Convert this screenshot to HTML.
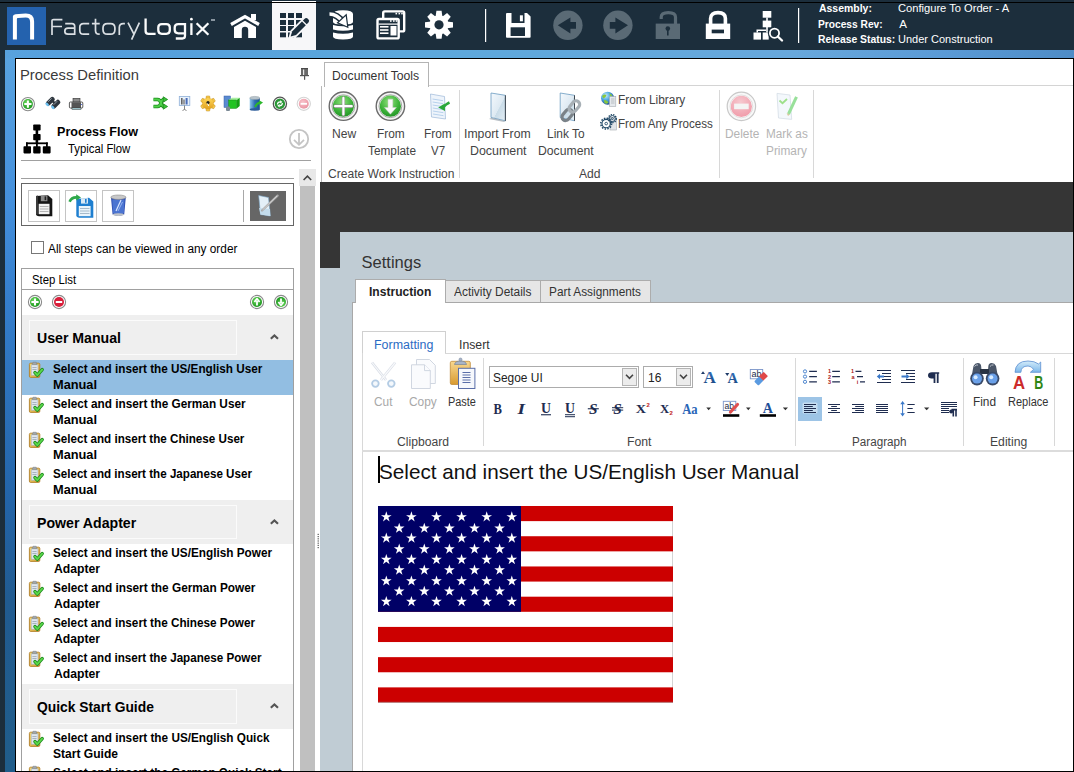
<!DOCTYPE html>
<html><head><meta charset="utf-8">
<style>
*{box-sizing:border-box}
html,body{margin:0;padding:0}
body{width:1074px;height:772px;overflow:hidden;position:relative;background:#1c2e3c;font-family:"Liberation Sans",sans-serif;color:#000}
.a{position:absolute}
.t{position:absolute;white-space:nowrap;line-height:1}

</style></head><body>
<div class="a" style="left:0;top:2px;width:1074px;height:1px;background:#000"></div>
<div class="a" style="left:272px;top:1px;width:44px;height:1px;background:#fff"></div>
<div class="a" style="left:272px;top:3px;width:44px;height:47px;background:#f7f7f9"></div>
<svg class="a" style="left:0;top:0" width="1074" height="50" viewBox="0 0 1074 50">
 <!-- logo box -->
 <rect x="7" y="7" width="39" height="38" fill="#2462ae"/>
 <path d="M12.9 39.5 V16.2 Q13 14.6 15.5 14.2 L25.5 13.6 Q34.1 13.4 34.1 21.5 V39.5 H30.1 V22 Q30.1 17.6 25.8 17.6 L17.8 18 Q16.9 18.1 16.9 19.2 V39.5 Z" fill="#fff"/>
 <!-- home -->
 <path d="M231 24.5 L245 16.5 L259 24.5" fill="none" stroke="#fff" stroke-width="3.2" stroke-linejoin="miter"/>
 <rect x="251" y="14" width="5" height="6" fill="#fff"/>
 <path d="M234 27 L245 20.8 L256 27 V38 H248.2 V30 Q248.2 26.8 245 26.8 Q241.8 26.8 241.8 30 V38 H234 Z" fill="#fff"/>
 <!-- grid pencil (on light tab) -->
 <g fill="#1c2e3c">
  <rect x="280" y="13" width="6" height="5"/><rect x="288" y="13" width="6" height="5"/><rect x="296" y="13" width="6" height="5"/>
  <rect x="280" y="20" width="6" height="5"/><rect x="288" y="20" width="6" height="5"/><rect x="296" y="20" width="6" height="5"/>
  <rect x="280" y="26" width="6" height="5"/><rect x="288" y="26" width="6" height="5"/><rect x="296" y="26" width="6" height="5"/>
  <rect x="280" y="32.5" width="6" height="4.8"/><rect x="288" y="32.5" width="6" height="4.8"/><rect x="296" y="32.5" width="6" height="4.8"/>
 </g>
 <g transform="translate(290.6,36.6) rotate(-45)">
  <path d="M-1 0 L4.6 -3.2 H23 Q25.4 -3.2 25.4 0 Q25.4 3.2 23 3.2 H4.6 Z" fill="#f7f7f9" stroke="#f7f7f9" stroke-width="2.4" stroke-linejoin="miter"/>
  <path d="M0 0 L5 -2.7 H18.8 V2.7 H5 Z" fill="#1c2e3c"/>
  <path d="M20.1 -2.7 H22.6 Q24.8 -2.7 24.8 0 Q24.8 2.7 22.6 2.7 H20.1 Z" fill="#1c2e3c"/>
  
 </g>
 <!-- database -->
 <g fill="#fff">
  <path d="M333 14 Q333 10.2 343 10.2 Q353 10.2 353 14 V22 Q353 24.5 343 24.5 Q333 24.5 333 22 Z"/>
  <path d="M333 25 Q343 27.5 353 25 V29.5 Q343 32 333 29.5 Z"/>
  <path d="M333 32.5 Q343 35 353 32.5 V36.5 Q353 39.5 343 39.5 Q333 39.5 333 36.5 Z"/>
 </g>
 <path d="M329.5 14 Q337 14 344 23" fill="none" stroke="#1c2e3c" stroke-width="6.4"/>
 <path d="M329.5 14 Q337 14 343.5 22.5" fill="none" stroke="#fff" stroke-width="3.6"/>
 <path d="M347.8 27.2 L337.5 22.8 L346.2 14.8 Z" fill="#fff" stroke="#1c2e3c" stroke-width="1.2"/>
 <!-- windows -->
 <rect x="383.2" y="11.4" width="21" height="20" rx="1.5" fill="none" stroke="#fff" stroke-width="2.4"/>
 <rect x="377.5" y="19" width="21.2" height="19.4" rx="1.5" fill="#1c2e3c" stroke="#fff" stroke-width="2.4"/>
 <g fill="#fff"><rect x="395.5" y="12.8" width="1.6" height="1.6"/><rect x="398.5" y="12.8" width="1.6" height="1.6"/><rect x="401.2" y="12.8" width="1.6" height="1.6"/>
 <rect x="390" y="20.2" width="1.6" height="1.6"/><rect x="393" y="20.2" width="1.6" height="1.6"/><rect x="395.7" y="20.2" width="1.6" height="1.6"/>
 <rect x="378.5" y="23.5" width="19.5" height="1.2"/>
 <rect x="380" y="26" width="8.5" height="1.6"/><rect x="380" y="29.2" width="8.5" height="1.6"/><rect x="380" y="32.4" width="8.5" height="1.6"/>
 <rect x="390.5" y="26" width="6" height="9.5"/></g>
 <!-- gear -->
 <g transform="translate(439,24.8)" fill="#fff">
  <path id="gt" d="M-2.6 -14 H2.6 L3.4 -8 H-3.4 Z"/>
  <use href="#gt" transform="rotate(45)"/><use href="#gt" transform="rotate(90)"/><use href="#gt" transform="rotate(135)"/>
  <use href="#gt" transform="rotate(180)"/><use href="#gt" transform="rotate(225)"/><use href="#gt" transform="rotate(270)"/><use href="#gt" transform="rotate(315)"/>
  <circle r="9.6"/>
  <circle r="4.6" fill="#1c2e3c"/>
 </g>
 <rect x="485" y="9" width="1.2" height="33" fill="#fff"/>
 <!-- save -->
 <path d="M506 14 Q506 13 507 13 H527 L530.6 16.6 V37 Q530.6 37.8 529.6 37.8 H507 Q506 37.8 506 37 Z" fill="#fff"/>
 <rect x="511.5" y="13" width="13" height="10" fill="#1c2e3c"/>
 <rect x="519.9" y="15.3" width="3" height="6" fill="#fff"/>
 <rect x="510.6" y="27.3" width="14.4" height="8.7" fill="#1c2e3c"/>
 <!-- back/forward -->
 <circle cx="567.9" cy="25.3" r="14.7" fill="#5a6a75"/>
 <path d="M557.8 25.3 L570.4 17.6 V22 H576 V28.7 H570.4 V33.4 Z" fill="#1c2e3c"/>
 <circle cx="617.9" cy="25.3" r="14.7" fill="#5a6a75"/>
 <path d="M628 25.3 L615.4 17.6 V22 H609.8 V28.7 H615.4 V33.4 Z" fill="#1c2e3c"/>
 <!-- unlock -->
 <path d="M661.2 19 V17 Q661.2 12.6 668.3 12.6 Q675.5 12.6 675.5 17 V24" fill="none" stroke="#5a6a75" stroke-width="3.2"/>
 <rect x="655.7" y="23.6" width="24.3" height="15.4" fill="#5a6a75"/>
 <circle cx="667.8" cy="28.6" r="2.3" fill="#1c2e3c"/><rect x="667" y="29" width="1.6" height="6.5" fill="#1c2e3c"/>
 <!-- lock -->
 <path d="M710.6 24 V18.5 Q710.6 12.6 718 12.6 Q725.4 12.6 725.4 18.5 V24" fill="none" stroke="#fff" stroke-width="3.6"/>
 <rect x="705.8" y="23.6" width="24.4" height="15.4" fill="#fff"/>
 <rect x="711.7" y="29.6" width="12.3" height="3.7" fill="#1c2e3c"/>
 <!-- process search -->
 <g fill="#fff">
  <rect x="762.7" y="11" width="8.6" height="6.7"/>
  <rect x="766.2" y="17.5" width="1.6" height="3.5"/>
  <rect x="762.7" y="20.6" width="8.6" height="6.7"/>
  <rect x="766.2" y="27" width="1.6" height="5.5"/>
  <rect x="753.5" y="32.5" width="7.5" height="7.1"/>
  <rect x="762.7" y="32.5" width="6" height="7.1"/>
  <path d="M756.5 32.5 V29.6 H766 V31 H758 V32.5 Z"/>
 </g>
 <circle cx="774.5" cy="33.2" r="6.6" fill="#1c2e3c"/>
 <circle cx="774.5" cy="33.2" r="4.6" fill="none" stroke="#fff" stroke-width="1.8"/>
 <path d="M777.8 36.5 L782 40.5" stroke="#fff" stroke-width="2.4" stroke-linecap="round"/>
 <rect x="798" y="8" width="1.2" height="35" fill="#fff"/>
</svg>
<svg class="a" style="left:0;top:0" width="230" height="50" viewBox="0 0 230 50"><g fill="none" stroke="#dadfe3" stroke-width="1.7" stroke-linecap="butt">
<path d="M52 35 V20.6 Q52 19.7 53.6 19.7 H62.4 M52 26.5 H62"/>
<path d="M65.2 23.6 H72 Q74.7 23.6 74.7 26.3 V35 M74.7 28.2 H68 Q64.8 28.2 64.8 31.2 Q64.8 34.2 68 34.2 H74.7"/>
<path d="M89.2 23.6 H83.5 Q79.8 23.6 79.8 27.3 V30.5 Q79.8 34.2 83.5 34.2 H89.2"/>
<path d="M95.5 18.7 V30.5 Q95.5 34.2 99.2 34.2 H99.7 M91.9 23.6 H99.7"/>
<path d="M107.4 23.6 H110.5 Q114.9 23.6 114.9 28.1 V29.7 Q114.9 34.2 110.5 34.2 H107.4 Q103 34.2 103 29.7 V28.1 Q103 23.6 107.4 23.6 Z"/>
<path d="M119.3 35 V27.6 Q119.3 23.6 123.3 23.6 H124.9"/>
<path d="M128 22.7 L134.2 34.6 M139.4 22.7 L131.6 39.7"/>
</g><g fill="none" stroke="#fbfcfc" stroke-width="2.3">
<path d="M145.6 18.5 V31 Q145.6 33.8 148.4 33.8 H155.6"/>
<path d="M161.8 24.1 H166.3 Q169.8 24.1 169.8 27.6 V30.3 Q169.8 33.8 166.3 33.8 H161.8 Q158.3 33.8 158.3 30.3 V27.6 Q158.3 24.1 161.8 24.1 Z"/>
<path d="M185 24.1 H178.3 Q174.7 24.1 174.7 27.6 V29.8 Q174.7 33.3 178.3 33.3 H185 M185 23 V35.8 Q185 38.5 182.3 38.5 H175.8"/>
<path d="M191.4 23.2 V35"/>
<path d="M196.6 23.3 L208.4 34.8 M208.4 23.3 L196.6 34.8"/>
</g><circle cx="191.4" cy="19.2" r="1.35" fill="#fff"/></svg>
<div class="a" style="left:211px;top:19px;width:4px;height:1.5px;background:#8a96a0"></div>
<div class="t" style="left:819.20px;top:3.00px;color:#fff;font-family:'Liberation Sans',sans-serif;font-size:11.5px;font-weight:bold;transform:scaleX(0.9088);transform-origin:0 0;">Assembly:</div>
<div class="t" style="left:818.31px;top:19.00px;color:#fff;font-family:'Liberation Sans',sans-serif;font-size:11.5px;font-weight:bold;transform:scaleX(0.8873);transform-origin:0 0;">Process Rev:</div>
<div class="t" style="left:818.30px;top:34.00px;color:#fff;font-family:'Liberation Sans',sans-serif;font-size:11.5px;font-weight:bold;transform:scaleX(0.9024);transform-origin:0 0;">Release Status:</div>
<div class="t" style="left:898.33px;top:3.00px;color:#fff;font-family:'Liberation Sans',sans-serif;font-size:11.5px;transform:scaleX(0.9684);transform-origin:0 0;">Configure To Order - A</div>
<div class="t" style="left:899.30px;top:19.00px;color:#fff;font-family:'Liberation Sans',sans-serif;font-size:11.5px;">A</div>
<div class="t" style="left:898.34px;top:34.00px;color:#fff;font-family:'Liberation Sans',sans-serif;font-size:11.5px;transform:scaleX(0.9561);transform-origin:0 0;">Under Construction</div>
<div class="a" style="left:5px;top:50px;width:1069px;height:722px;background:linear-gradient(to bottom,#5aa4e0 0%,#4590dc 20.8%,#357ecc 34.6%,#2364a8 62.3%,#215b90 76.2%,#205d8a 100%)"></div>
<div class="a" style="left:5px;top:50px;width:1069px;height:8px;background:linear-gradient(to right,#58a2de 0%,#549edc 10%,#5ca8dc 37%,#68a8dc 74%,#5a9ad6 88%,#4e8cc6 100%)"></div>
<div class="a" style="left:15px;top:58px;width:1059px;height:714px;background:#000"></div>
<div class="a" style="left:16px;top:59px;width:1057px;height:712px;background:#fff"></div>
<div class="t" style="left:20.02px;top:67.00px;color:#3a3a3a;font-family:'Liberation Sans',sans-serif;font-size:15px;transform:scaleX(0.9832);transform-origin:0 0;">Process Definition</div>
<div class="a" style="left:21px;top:160px;width:290px;height:1px;background:#a0a0a0"></div>
<div class="t" style="left:57.07px;top:125.00px;color:#000;font-family:'Liberation Sans',sans-serif;font-size:13.5px;font-weight:bold;transform:scaleX(0.9302);transform-origin:0 0;">Process Flow</div>
<div class="t" style="left:67.70px;top:143.00px;color:#000;font-family:'Liberation Sans',sans-serif;font-size:12.5px;transform:scaleX(0.9058);transform-origin:0 0;">Typical Flow</div>
<div class="a" style="left:21px;top:178px;width:273px;height:1px;background:#a0a0a0"></div>
<div class="a" style="left:21px;top:183px;width:273px;height:43px;border:1px solid #666"></div>
<div class="a" style="left:28px;top:190px;width:32px;height:32px;border:1px solid #c4c4c4"></div>
<div class="a" style="left:65px;top:190px;width:32px;height:32px;border:1px solid #c4c4c4"></div>
<div class="a" style="left:102px;top:190px;width:32px;height:32px;border:1px solid #c4c4c4"></div>
<div class="a" style="left:243px;top:190px;width:1px;height:32px;background:#a8a8a8"></div>
<div class="a" style="left:250px;top:191px;width:36px;height:30px;background:#666"></div>
<div class="a" style="left:31px;top:241px;width:13px;height:13px;border:1px solid #777;background:#fff"></div>
<div class="t" style="left:48.20px;top:243.00px;color:#000;font-family:'Liberation Sans',sans-serif;font-size:12.5px;transform:scaleX(0.9465);transform-origin:0 0;">All steps can be viewed in any order</div>
<div class="a" style="left:21px;top:268px;width:273px;height:510px;border:1px solid #a0a0a0"></div>
<div class="a" style="left:22px;top:289px;width:271px;height:1px;background:#a0a0a0"></div>
<div class="t" style="left:32.29px;top:274.00px;color:#000;font-family:'Liberation Sans',sans-serif;font-size:12.5px;transform:scaleX(0.9083);transform-origin:0 0;">Step List</div>
<div class="a" style="left:22px;top:315px;width:271px;height:45px;background:#efefef"></div>
<div class="a" style="left:29px;top:320px;width:208px;height:35px;border:1px solid #fbfbfb"></div>
<div class="t" style="left:37.19px;top:331.00px;color:#000;font-family:'Liberation Sans',sans-serif;font-size:14px;font-weight:bold;transform:scaleX(1.0086);transform-origin:0 0;">User Manual</div>
<div class="a" style="left:22px;top:360px;width:271px;height:35px;background:#92bee2"></div>
<div class="t" style="left:52.86px;top:363.00px;color:#000;font-family:'Liberation Sans',sans-serif;font-size:12.5px;font-weight:bold;transform:scaleX(0.9387);transform-origin:0 0;">Select and insert the US/English User</div>
<div class="t" style="left:52.78px;top:379.00px;color:#000;font-family:'Liberation Sans',sans-serif;font-size:12.5px;font-weight:bold;transform:scaleX(1.0220);transform-origin:0 0;">Manual</div>
<div class="t" style="left:52.86px;top:398.00px;color:#000;font-family:'Liberation Sans',sans-serif;font-size:12.5px;font-weight:bold;transform:scaleX(0.9429);transform-origin:0 0;">Select and insert the German User</div>
<div class="t" style="left:52.78px;top:414.00px;color:#000;font-family:'Liberation Sans',sans-serif;font-size:12.5px;font-weight:bold;transform:scaleX(1.0220);transform-origin:0 0;">Manual</div>
<div class="t" style="left:52.87px;top:433.00px;color:#000;font-family:'Liberation Sans',sans-serif;font-size:12.5px;font-weight:bold;transform:scaleX(0.9307);transform-origin:0 0;">Select and insert the Chinese User</div>
<div class="t" style="left:52.78px;top:449.00px;color:#000;font-family:'Liberation Sans',sans-serif;font-size:12.5px;font-weight:bold;transform:scaleX(1.0220);transform-origin:0 0;">Manual</div>
<div class="t" style="left:52.87px;top:468.00px;color:#000;font-family:'Liberation Sans',sans-serif;font-size:12.5px;font-weight:bold;transform:scaleX(0.9296);transform-origin:0 0;">Select and insert the Japanese User</div>
<div class="t" style="left:52.78px;top:484.00px;color:#000;font-family:'Liberation Sans',sans-serif;font-size:12.5px;font-weight:bold;transform:scaleX(1.0220);transform-origin:0 0;">Manual</div>
<div class="a" style="left:22px;top:500px;width:271px;height:44px;background:#efefef"></div>
<div class="a" style="left:29px;top:505px;width:208px;height:34px;border:1px solid #fbfbfb"></div>
<div class="t" style="left:37.19px;top:516.00px;color:#000;font-family:'Liberation Sans',sans-serif;font-size:14px;font-weight:bold;transform:scaleX(1.0093);transform-origin:0 0;">Power Adapter</div>
<div class="t" style="left:52.86px;top:547.00px;color:#000;font-family:'Liberation Sans',sans-serif;font-size:12.5px;font-weight:bold;transform:scaleX(0.9414);transform-origin:0 0;">Select and insert the US/English Power</div>
<div class="t" style="left:53.80px;top:563.00px;color:#000;font-family:'Liberation Sans',sans-serif;font-size:12.5px;font-weight:bold;transform:scaleX(0.9745);transform-origin:0 0;">Adapter</div>
<div class="t" style="left:52.85px;top:582.00px;color:#000;font-family:'Liberation Sans',sans-serif;font-size:12.5px;font-weight:bold;transform:scaleX(0.9460);transform-origin:0 0;">Select and insert the German Power</div>
<div class="t" style="left:53.80px;top:598.00px;color:#000;font-family:'Liberation Sans',sans-serif;font-size:12.5px;font-weight:bold;transform:scaleX(0.9745);transform-origin:0 0;">Adapter</div>
<div class="t" style="left:52.86px;top:617.00px;color:#000;font-family:'Liberation Sans',sans-serif;font-size:12.5px;font-weight:bold;transform:scaleX(0.9383);transform-origin:0 0;">Select and insert the Chinese Power</div>
<div class="t" style="left:53.80px;top:633.00px;color:#000;font-family:'Liberation Sans',sans-serif;font-size:12.5px;font-weight:bold;transform:scaleX(0.9745);transform-origin:0 0;">Adapter</div>
<div class="t" style="left:52.87px;top:652.00px;color:#000;font-family:'Liberation Sans',sans-serif;font-size:12.5px;font-weight:bold;transform:scaleX(0.9318);transform-origin:0 0;">Select and insert the Japanese Power</div>
<div class="t" style="left:53.80px;top:668.00px;color:#000;font-family:'Liberation Sans',sans-serif;font-size:12.5px;font-weight:bold;transform:scaleX(0.9745);transform-origin:0 0;">Adapter</div>
<div class="a" style="left:22px;top:684px;width:271px;height:45px;background:#efefef"></div>
<div class="a" style="left:29px;top:689px;width:208px;height:35px;border:1px solid #fbfbfb"></div>
<div class="t" style="left:37.21px;top:700.00px;color:#000;font-family:'Liberation Sans',sans-serif;font-size:14px;font-weight:bold;transform:scaleX(0.9880);transform-origin:0 0;">Quick Start Guide</div>
<div class="t" style="left:52.86px;top:732.00px;color:#000;font-family:'Liberation Sans',sans-serif;font-size:12.5px;font-weight:bold;transform:scaleX(0.9415);transform-origin:0 0;">Select and insert the US/English Quick</div>
<div class="t" style="left:52.83px;top:748.00px;color:#000;font-family:'Liberation Sans',sans-serif;font-size:12.5px;font-weight:bold;transform:scaleX(0.9652);transform-origin:0 0;">Start Guide</div>
<div class="t" style="left:52.86px;top:767.00px;color:#000;font-family:'Liberation Sans',sans-serif;font-size:12.5px;font-weight:bold;transform:scaleX(0.9400);transform-origin:0 0;">Select and insert the German Quick Start</div>
<div class="t" style="left:53.80px;top:783.00px;color:#000;font-family:'Liberation Sans',sans-serif;font-size:12.5px;font-weight:bold;transform:scaleX(0.9700);transform-origin:0 0;">Guide</div>
<div class="a" style="left:324px;top:62px;width:105px;height:25px;border:1px solid #b4b4b4;border-bottom:none;background:#fff"></div>
<div class="a" style="left:429px;top:85px;width:644px;height:1px;background:#d4d4d4"></div>
<div class="a" style="left:321px;top:86px;width:1px;height:96px;background:#b8b8b8"></div>
<div class="t" style="left:332.48px;top:70.00px;color:#333;font-family:'Liberation Sans',sans-serif;font-size:12px;transform:scaleX(1.0155);transform-origin:0 0;">Document Tools</div>
<div class="a" style="left:459px;top:90px;width:1px;height:88px;background:#d8d8d8"></div>
<div class="a" style="left:719px;top:90px;width:1px;height:88px;background:#d8d8d8"></div>
<div class="a" style="left:813px;top:90px;width:1px;height:88px;background:#d8d8d8"></div>
<div class="t" style="left:331.73px;top:128.00px;color:#444;font-family:'Liberation Sans',sans-serif;font-size:12.5px;transform:scaleX(0.9667);transform-origin:0 0;">New</div>
<div class="t" style="left:376.65px;top:128.00px;color:#444;font-family:'Liberation Sans',sans-serif;font-size:12.5px;transform:scaleX(0.9500);transform-origin:0 0;">From</div>
<div class="t" style="left:367.50px;top:145.00px;color:#444;font-family:'Liberation Sans',sans-serif;font-size:12.5px;transform:scaleX(0.9460);transform-origin:0 0;">Template</div>
<div class="t" style="left:423.85px;top:128.00px;color:#444;font-family:'Liberation Sans',sans-serif;font-size:12.5px;transform:scaleX(0.9500);transform-origin:0 0;">From</div>
<div class="t" style="left:430.80px;top:145.00px;color:#444;font-family:'Liberation Sans',sans-serif;font-size:12.5px;transform:scaleX(0.9200);transform-origin:0 0;">V7</div>
<div class="t" style="left:327.53px;top:168.00px;color:#444;font-family:'Liberation Sans',sans-serif;font-size:12.5px;transform:scaleX(0.9651);transform-origin:0 0;">Create Work Instruction</div>
<div class="t" style="left:464.42px;top:128.00px;color:#444;font-family:'Liberation Sans',sans-serif;font-size:12.5px;transform:scaleX(0.9791);transform-origin:0 0;">Import From</div>
<div class="t" style="left:469.61px;top:145.00px;color:#444;font-family:'Liberation Sans',sans-serif;font-size:12.5px;transform:scaleX(0.9929);transform-origin:0 0;">Document</div>
<div class="t" style="left:547.04px;top:128.00px;color:#444;font-family:'Liberation Sans',sans-serif;font-size:12.5px;transform:scaleX(0.9553);transform-origin:0 0;">Link To</div>
<div class="t" style="left:538.22px;top:145.00px;color:#444;font-family:'Liberation Sans',sans-serif;font-size:12.5px;transform:scaleX(0.9768);transform-origin:0 0;">Document</div>
<div class="t" style="left:578.70px;top:168.00px;color:#444;font-family:'Liberation Sans',sans-serif;font-size:12.5px;transform:scaleX(0.9682);transform-origin:0 0;">Add</div>
<div class="t" style="left:618.05px;top:94.00px;color:#444;font-family:'Liberation Sans',sans-serif;font-size:12.5px;transform:scaleX(0.9500);transform-origin:0 0;">From Library</div>
<div class="t" style="left:618.07px;top:118.00px;color:#444;font-family:'Liberation Sans',sans-serif;font-size:12.5px;transform:scaleX(0.9287);transform-origin:0 0;">From Any Process</div>
<div class="t" style="left:724.75px;top:128.00px;color:#b4b4b4;font-family:'Liberation Sans',sans-serif;font-size:12.5px;transform:scaleX(0.9514);transform-origin:0 0;">Delete</div>
<div class="t" style="left:765.66px;top:128.00px;color:#b4b4b4;font-family:'Liberation Sans',sans-serif;font-size:12.5px;transform:scaleX(0.9395);transform-origin:0 0;">Mark as</div>
<div class="t" style="left:766.05px;top:145.00px;color:#b4b4b4;font-family:'Liberation Sans',sans-serif;font-size:12.5px;transform:scaleX(0.9476);transform-origin:0 0;">Primary</div>
<div class="a" style="left:320px;top:182px;width:753px;height:589px;background:#353535"></div>
<div class="a" style="left:340px;top:232px;width:733px;height:539px;background:#c0ccd4"></div>
<div class="a" style="left:320px;top:268px;width:20px;height:503px;background:#c0ccd4"></div>
<div class="t" style="left:361.60px;top:254.00px;color:#333;font-family:'Liberation Sans',sans-serif;font-size:16.5px;">Settings</div>
<div class="a" style="left:445px;top:280px;width:96px;height:23px;background:#e6e6e6;border:1px solid #acacac"></div>
<div class="a" style="left:540px;top:280px;width:111px;height:23px;background:#e6e6e6;border:1px solid #acacac"></div>
<div class="a" style="left:352px;top:302px;width:721px;height:469px;background:#fff;border-left:1px solid #a8a8a8;border-top:1px solid #a8a8a8"></div>
<div class="a" style="left:355px;top:279px;width:91px;height:24px;background:#fff;border:1px solid #acacac;border-bottom:none"></div>
<div class="t" style="left:368.53px;top:286.00px;color:#222;font-family:'Liberation Sans',sans-serif;font-size:12.5px;font-weight:bold;transform:scaleX(0.9651);transform-origin:0 0;">Instruction</div>
<div class="t" style="left:454.00px;top:286.00px;color:#333;font-family:'Liberation Sans',sans-serif;font-size:12.5px;transform:scaleX(0.9531);transform-origin:0 0;">Activity Details</div>
<div class="t" style="left:548.65px;top:286.00px;color:#333;font-family:'Liberation Sans',sans-serif;font-size:12.5px;transform:scaleX(0.9458);transform-origin:0 0;">Part Assignments</div>
<div class="a" style="left:362px;top:331px;width:84px;height:23px;border:1px solid #d0d0d0;border-bottom:none;background:#fff"></div>
<div class="a" style="left:445px;top:353px;width:628px;height:1px;background:#d8d8d8"></div>
<div class="a" style="left:362px;top:353px;width:1px;height:418px;background:#d8d8d8"></div>
<div class="t" style="left:374.31px;top:339.00px;color:#2b6cc4;font-family:'Liberation Sans',sans-serif;font-size:12.5px;transform:scaleX(0.9948);transform-origin:0 0;">Formatting</div>
<div class="t" style="left:459.22px;top:339.00px;color:#333;font-family:'Liberation Sans',sans-serif;font-size:12.5px;transform:scaleX(0.9800);transform-origin:0 0;">Insert</div>
<div class="a" style="left:483px;top:358px;width:1px;height:88px;background:#d8d8d8"></div>
<div class="a" style="left:795px;top:358px;width:1px;height:88px;background:#d8d8d8"></div>
<div class="a" style="left:963px;top:358px;width:1px;height:88px;background:#d8d8d8"></div>
<div class="a" style="left:1054px;top:358px;width:1px;height:88px;background:#d8d8d8"></div>
<div class="t" style="left:374.05px;top:396.00px;color:#a8a8a8;font-family:'Liberation Sans',sans-serif;font-size:12.5px;transform:scaleX(0.9474);transform-origin:0 0;">Cut</div>
<div class="t" style="left:409.05px;top:396.00px;color:#a8a8a8;font-family:'Liberation Sans',sans-serif;font-size:12.5px;transform:scaleX(0.9536);transform-origin:0 0;">Copy</div>
<div class="t" style="left:447.73px;top:396.00px;color:#333;font-family:'Liberation Sans',sans-serif;font-size:12.5px;transform:scaleX(0.8742);transform-origin:0 0;">Paste</div>
<div class="t" style="left:396.53px;top:436.00px;color:#444;font-family:'Liberation Sans',sans-serif;font-size:12.5px;transform:scaleX(0.9712);transform-origin:0 0;">Clipboard</div>
<div class="t" style="left:627.02px;top:436.00px;color:#444;font-family:'Liberation Sans',sans-serif;font-size:12.5px;transform:scaleX(0.9792);transform-origin:0 0;">Font</div>
<div class="t" style="left:851.87px;top:436.00px;color:#444;font-family:'Liberation Sans',sans-serif;font-size:12.5px;transform:scaleX(0.9333);transform-origin:0 0;">Paragraph</div>
<div class="t" style="left:990.03px;top:436.00px;color:#444;font-family:'Liberation Sans',sans-serif;font-size:12.5px;transform:scaleX(0.9730);transform-origin:0 0;">Editing</div>
<div class="t" style="left:973.05px;top:396.00px;color:#333;font-family:'Liberation Sans',sans-serif;font-size:12.5px;transform:scaleX(0.9478);transform-origin:0 0;">Find</div>
<div class="t" style="left:1007.92px;top:396.00px;color:#333;font-family:'Liberation Sans',sans-serif;font-size:12.5px;transform:scaleX(0.8822);transform-origin:0 0;">Replace</div>
<div class="a" style="left:489px;top:366px;width:150px;height:22px;border:1px solid #acacac;background:#fff"></div>
<div class="a" style="left:622px;top:368px;width:15px;height:18px;border:1px solid #b4b4b4;background:#ececec"></div>
<div class="a" style="left:643px;top:366px;width:50px;height:22px;border:1px solid #acacac;background:#fff"></div>
<div class="a" style="left:676px;top:368px;width:15px;height:18px;border:1px solid #b4b4b4;background:#ececec"></div>
<svg class="a" style="left:0;top:0" width="1074" height="772" viewBox="0 0 1074 772"><path d="M626 374.8 L629.5 378.3 L633 374.8 M680 374.8 L683.5 378.3 L687 374.8" fill="none" stroke="#444" stroke-width="1.6"/></svg>
<div class="t" style="left:492.75px;top:372.00px;color:#222;font-family:'Liberation Sans',sans-serif;font-size:12.5px;transform:scaleX(0.9540);transform-origin:0 0;">Segoe UI</div>
<div class="t" style="left:647.54px;top:372.00px;color:#222;font-family:'Liberation Sans',sans-serif;font-size:12.5px;transform:scaleX(0.9615);transform-origin:0 0;">16</div>
<div class="a" style="left:798px;top:397px;width:24px;height:24px;background:#9dc4e6"></div>
<div class="a" style="left:362px;top:450px;width:711px;height:2px;background:#dcdcdc"></div>
<div class="t" style="left:379.01px;top:461.00px;color:#111;font-family:'Liberation Sans',sans-serif;font-size:21px;transform:scaleX(0.9858);transform-origin:0 0;">Select and insert the US/English User Manual</div>
<div class="a" style="left:378px;top:456px;width:2px;height:27px;background:#000"></div>
<div class="a" style="left:299px;top:169px;width:17px;height:17px;background:#e8e8e8"></div>
<div class="a" style="left:300px;top:186px;width:15px;height:585px;background:#c0c0c0"></div>
<svg class="a" style="left:0;top:0" width="1074" height="772" viewBox="0 0 1074 772"><path d="M303.6 180 L307.4 176.2 L311.2 180" fill="none" stroke="#444" stroke-width="1.6"/></svg>
<div class="a" style="left:15px;top:771px;width:1059px;height:1px;background:#000"></div>
<div class="a" style="left:1073px;top:58px;width:1px;height:714px;background:#000"></div>
<svg class="a" style="left:378px;top:506px" width="295" height="196.5" viewBox="0 0 295 196.5"><rect width="295" height="196.5" fill="#fff"/><rect x="294" y="0" width="1" height="196.5" fill="#d4d4d4"/><rect x="0" y="0.00" width="295" height="15.12" fill="#cc0000"/><rect x="0" y="30.23" width="295" height="15.12" fill="#cc0000"/><rect x="0" y="60.46" width="295" height="15.12" fill="#cc0000"/><rect x="0" y="90.69" width="295" height="15.12" fill="#cc0000"/><rect x="0" y="120.92" width="295" height="15.12" fill="#cc0000"/><rect x="0" y="151.15" width="295" height="15.12" fill="#cc0000"/><rect x="0" y="181.38" width="295" height="15.12" fill="#cc0000"/><rect x="0" y="0" width="143" height="105.81" fill="#000066"/><path d="M8.30,5.30 L9.56,9.17 L13.63,9.17 L10.33,11.56 L11.59,15.43 L8.30,13.04 L5.01,15.43 L6.27,11.56 L2.97,9.17 L7.04,9.17ZM33.40,5.30 L34.66,9.17 L38.73,9.17 L35.43,11.56 L36.69,15.43 L33.40,13.04 L30.11,15.43 L31.37,11.56 L28.07,9.17 L32.14,9.17ZM58.50,5.30 L59.76,9.17 L63.83,9.17 L60.53,11.56 L61.79,15.43 L58.50,13.04 L55.21,15.43 L56.47,11.56 L53.17,9.17 L57.24,9.17ZM83.60,5.30 L84.86,9.17 L88.93,9.17 L85.63,11.56 L86.89,15.43 L83.60,13.04 L80.31,15.43 L81.57,11.56 L78.27,9.17 L82.34,9.17ZM108.70,5.30 L109.96,9.17 L114.03,9.17 L110.73,11.56 L111.99,15.43 L108.70,13.04 L105.41,15.43 L106.67,11.56 L103.37,9.17 L107.44,9.17ZM133.80,5.30 L135.06,9.17 L139.13,9.17 L135.83,11.56 L137.09,15.43 L133.80,13.04 L130.51,15.43 L131.77,11.56 L128.47,9.17 L132.54,9.17ZM21.20,16.70 L22.46,20.57 L26.53,20.57 L23.23,22.96 L24.49,26.83 L21.20,24.44 L17.91,26.83 L19.17,22.96 L15.87,20.57 L19.94,20.57ZM46.30,16.70 L47.56,20.57 L51.63,20.57 L48.33,22.96 L49.59,26.83 L46.30,24.44 L43.01,26.83 L44.27,22.96 L40.97,20.57 L45.04,20.57ZM71.40,16.70 L72.66,20.57 L76.73,20.57 L73.43,22.96 L74.69,26.83 L71.40,24.44 L68.11,26.83 L69.37,22.96 L66.07,20.57 L70.14,20.57ZM96.50,16.70 L97.76,20.57 L101.83,20.57 L98.53,22.96 L99.79,26.83 L96.50,24.44 L93.21,26.83 L94.47,22.96 L91.17,20.57 L95.24,20.57ZM121.60,16.70 L122.86,20.57 L126.93,20.57 L123.63,22.96 L124.89,26.83 L121.60,24.44 L118.31,26.83 L119.57,22.96 L116.27,20.57 L120.34,20.57ZM8.30,26.60 L9.56,30.47 L13.63,30.47 L10.33,32.86 L11.59,36.73 L8.30,34.34 L5.01,36.73 L6.27,32.86 L2.97,30.47 L7.04,30.47ZM33.40,26.60 L34.66,30.47 L38.73,30.47 L35.43,32.86 L36.69,36.73 L33.40,34.34 L30.11,36.73 L31.37,32.86 L28.07,30.47 L32.14,30.47ZM58.50,26.60 L59.76,30.47 L63.83,30.47 L60.53,32.86 L61.79,36.73 L58.50,34.34 L55.21,36.73 L56.47,32.86 L53.17,30.47 L57.24,30.47ZM83.60,26.60 L84.86,30.47 L88.93,30.47 L85.63,32.86 L86.89,36.73 L83.60,34.34 L80.31,36.73 L81.57,32.86 L78.27,30.47 L82.34,30.47ZM108.70,26.60 L109.96,30.47 L114.03,30.47 L110.73,32.86 L111.99,36.73 L108.70,34.34 L105.41,36.73 L106.67,32.86 L103.37,30.47 L107.44,30.47ZM133.80,26.60 L135.06,30.47 L139.13,30.47 L135.83,32.86 L137.09,36.73 L133.80,34.34 L130.51,36.73 L131.77,32.86 L128.47,30.47 L132.54,30.47ZM21.20,37.50 L22.46,41.37 L26.53,41.37 L23.23,43.76 L24.49,47.63 L21.20,45.24 L17.91,47.63 L19.17,43.76 L15.87,41.37 L19.94,41.37ZM46.30,37.50 L47.56,41.37 L51.63,41.37 L48.33,43.76 L49.59,47.63 L46.30,45.24 L43.01,47.63 L44.27,43.76 L40.97,41.37 L45.04,41.37ZM71.40,37.50 L72.66,41.37 L76.73,41.37 L73.43,43.76 L74.69,47.63 L71.40,45.24 L68.11,47.63 L69.37,43.76 L66.07,41.37 L70.14,41.37ZM96.50,37.50 L97.76,41.37 L101.83,41.37 L98.53,43.76 L99.79,47.63 L96.50,45.24 L93.21,47.63 L94.47,43.76 L91.17,41.37 L95.24,41.37ZM121.60,37.50 L122.86,41.37 L126.93,41.37 L123.63,43.76 L124.89,47.63 L121.60,45.24 L118.31,47.63 L119.57,43.76 L116.27,41.37 L120.34,41.37ZM8.30,48.00 L9.56,51.87 L13.63,51.87 L10.33,54.26 L11.59,58.13 L8.30,55.74 L5.01,58.13 L6.27,54.26 L2.97,51.87 L7.04,51.87ZM33.40,48.00 L34.66,51.87 L38.73,51.87 L35.43,54.26 L36.69,58.13 L33.40,55.74 L30.11,58.13 L31.37,54.26 L28.07,51.87 L32.14,51.87ZM58.50,48.00 L59.76,51.87 L63.83,51.87 L60.53,54.26 L61.79,58.13 L58.50,55.74 L55.21,58.13 L56.47,54.26 L53.17,51.87 L57.24,51.87ZM83.60,48.00 L84.86,51.87 L88.93,51.87 L85.63,54.26 L86.89,58.13 L83.60,55.74 L80.31,58.13 L81.57,54.26 L78.27,51.87 L82.34,51.87ZM108.70,48.00 L109.96,51.87 L114.03,51.87 L110.73,54.26 L111.99,58.13 L108.70,55.74 L105.41,58.13 L106.67,54.26 L103.37,51.87 L107.44,51.87ZM133.80,48.00 L135.06,51.87 L139.13,51.87 L135.83,54.26 L137.09,58.13 L133.80,55.74 L130.51,58.13 L131.77,54.26 L128.47,51.87 L132.54,51.87ZM21.20,58.50 L22.46,62.37 L26.53,62.37 L23.23,64.76 L24.49,68.63 L21.20,66.24 L17.91,68.63 L19.17,64.76 L15.87,62.37 L19.94,62.37ZM46.30,58.50 L47.56,62.37 L51.63,62.37 L48.33,64.76 L49.59,68.63 L46.30,66.24 L43.01,68.63 L44.27,64.76 L40.97,62.37 L45.04,62.37ZM71.40,58.50 L72.66,62.37 L76.73,62.37 L73.43,64.76 L74.69,68.63 L71.40,66.24 L68.11,68.63 L69.37,64.76 L66.07,62.37 L70.14,62.37ZM96.50,58.50 L97.76,62.37 L101.83,62.37 L98.53,64.76 L99.79,68.63 L96.50,66.24 L93.21,68.63 L94.47,64.76 L91.17,62.37 L95.24,62.37ZM121.60,58.50 L122.86,62.37 L126.93,62.37 L123.63,64.76 L124.89,68.63 L121.60,66.24 L118.31,68.63 L119.57,64.76 L116.27,62.37 L120.34,62.37ZM8.30,69.40 L9.56,73.27 L13.63,73.27 L10.33,75.66 L11.59,79.53 L8.30,77.14 L5.01,79.53 L6.27,75.66 L2.97,73.27 L7.04,73.27ZM33.40,69.40 L34.66,73.27 L38.73,73.27 L35.43,75.66 L36.69,79.53 L33.40,77.14 L30.11,79.53 L31.37,75.66 L28.07,73.27 L32.14,73.27ZM58.50,69.40 L59.76,73.27 L63.83,73.27 L60.53,75.66 L61.79,79.53 L58.50,77.14 L55.21,79.53 L56.47,75.66 L53.17,73.27 L57.24,73.27ZM83.60,69.40 L84.86,73.27 L88.93,73.27 L85.63,75.66 L86.89,79.53 L83.60,77.14 L80.31,79.53 L81.57,75.66 L78.27,73.27 L82.34,73.27ZM108.70,69.40 L109.96,73.27 L114.03,73.27 L110.73,75.66 L111.99,79.53 L108.70,77.14 L105.41,79.53 L106.67,75.66 L103.37,73.27 L107.44,73.27ZM133.80,69.40 L135.06,73.27 L139.13,73.27 L135.83,75.66 L137.09,79.53 L133.80,77.14 L130.51,79.53 L131.77,75.66 L128.47,73.27 L132.54,73.27ZM21.20,79.70 L22.46,83.57 L26.53,83.57 L23.23,85.96 L24.49,89.83 L21.20,87.44 L17.91,89.83 L19.17,85.96 L15.87,83.57 L19.94,83.57ZM46.30,79.70 L47.56,83.57 L51.63,83.57 L48.33,85.96 L49.59,89.83 L46.30,87.44 L43.01,89.83 L44.27,85.96 L40.97,83.57 L45.04,83.57ZM71.40,79.70 L72.66,83.57 L76.73,83.57 L73.43,85.96 L74.69,89.83 L71.40,87.44 L68.11,89.83 L69.37,85.96 L66.07,83.57 L70.14,83.57ZM96.50,79.70 L97.76,83.57 L101.83,83.57 L98.53,85.96 L99.79,89.83 L96.50,87.44 L93.21,89.83 L94.47,85.96 L91.17,83.57 L95.24,83.57ZM121.60,79.70 L122.86,83.57 L126.93,83.57 L123.63,85.96 L124.89,89.83 L121.60,87.44 L118.31,89.83 L119.57,85.96 L116.27,83.57 L120.34,83.57ZM8.30,90.00 L9.56,93.87 L13.63,93.87 L10.33,96.26 L11.59,100.13 L8.30,97.74 L5.01,100.13 L6.27,96.26 L2.97,93.87 L7.04,93.87ZM33.40,90.00 L34.66,93.87 L38.73,93.87 L35.43,96.26 L36.69,100.13 L33.40,97.74 L30.11,100.13 L31.37,96.26 L28.07,93.87 L32.14,93.87ZM58.50,90.00 L59.76,93.87 L63.83,93.87 L60.53,96.26 L61.79,100.13 L58.50,97.74 L55.21,100.13 L56.47,96.26 L53.17,93.87 L57.24,93.87ZM83.60,90.00 L84.86,93.87 L88.93,93.87 L85.63,96.26 L86.89,100.13 L83.60,97.74 L80.31,100.13 L81.57,96.26 L78.27,93.87 L82.34,93.87ZM108.70,90.00 L109.96,93.87 L114.03,93.87 L110.73,96.26 L111.99,100.13 L108.70,97.74 L105.41,100.13 L106.67,96.26 L103.37,93.87 L107.44,93.87ZM133.80,90.00 L135.06,93.87 L139.13,93.87 L135.83,96.26 L137.09,100.13 L133.80,97.74 L130.51,100.13 L131.77,96.26 L128.47,93.87 L132.54,93.87Z" fill="#fff"/><rect x="0" y="195.8" width="295" height="0.9" fill="#888" opacity="0.6"/></svg>
<svg class="a" style="left:0;top:0" width="1074" height="772" viewBox="0 0 1074 772"><defs>
<radialGradient id="gG" cx="0.4" cy="0.35" r="0.7"><stop offset="0" stop-color="#6fdc5f"/><stop offset="1" stop-color="#16901a"/></radialGradient>
<radialGradient id="gP" cx="0.4" cy="0.35" r="0.7"><stop offset="0" stop-color="#f9c4cc"/><stop offset="1" stop-color="#e8919f"/></radialGradient>
<linearGradient id="gY" x1="0" y1="0" x2="0" y2="1"><stop offset="0" stop-color="#ffd85a"/><stop offset="1" stop-color="#e0a020"/></linearGradient>
<linearGradient id="gB" x1="0" y1="0" x2="1" y2="0"><stop offset="0" stop-color="#8ec8ec"/><stop offset="0.5" stop-color="#2f6fb4"/><stop offset="1" stop-color="#1c4f90"/></linearGradient>
<linearGradient id="gClip" x1="0" y1="0" x2="1" y2="1"><stop offset="0" stop-color="#f8dc70"/><stop offset="1" stop-color="#d8a038"/></linearGradient>
<g id="clip">
 <rect x="0.4" y="3.2" width="10.4" height="14.2" rx="1.2" fill="url(#gClip)" stroke="#b07e2a" stroke-width="0.9"/>
 <rect x="2.2" y="4.8" width="6.8" height="10.4" fill="#dfe6ee" stroke="#a4b0bc" stroke-width="0.6"/>
 <path d="M3.4 7.5 H7.6 M3.4 9.5 H7.6" stroke="#9aa6b2" stroke-width="0.8"/>
 <path d="M3.3 4.6 L4 2.2 H7.2 L7.9 4.6 Z" fill="#9ea6ae" stroke="#6e767e" stroke-width="0.4"/>
 <path d="M6 12.6 L8.3 15.2 L13.2 9.6" fill="none" stroke="#1e8a1e" stroke-width="3.4" stroke-linecap="round" stroke-linejoin="round"/>
 <path d="M6 12.6 L8.3 15.2 L13.2 9.6" fill="none" stroke="#5ad84a" stroke-width="1.8" stroke-linecap="round" stroke-linejoin="round"/>
</g>
<g id="cplus">
 <circle r="6.6" fill="#fff" stroke="#8a8a8a" stroke-width="1.1"/>
 <circle r="5" fill="url(#gG)"/>
 <path d="M-3.6 0 H3.6 M0 -3.6 V3.6" stroke="#fff" stroke-width="2"/>
</g>
<g id="cminus">
 <circle r="6.6" fill="#fff" stroke="#8a8a8a" stroke-width="1.1"/>
 <circle r="5" fill="#d81e3a"/>
 <path d="M-3.2 0 H3.2" stroke="#fff" stroke-width="2"/>
</g>
<g id="cup">
 <circle r="6.6" fill="#fff" stroke="#8a8a8a" stroke-width="1.1"/>
 <circle r="5" fill="url(#gG)"/>
 <path d="M0 3.5 V-1 M-2.6 0 L0 -3.2 L2.6 0" fill="none" stroke="#fff" stroke-width="1.8" stroke-linejoin="round"/>
</g>
<g id="chev"><path d="M-3.6 2.8 L0 -0.6 L3.6 2.8" fill="none" stroke="#555" stroke-width="2.1"/></g>
</defs>
<g><rect x="301" y="68" width="7" height="7" fill="#6a6a6a"/><rect x="301" y="68" width="7" height="1.2" fill="#4a4a4a"/><rect x="303" y="69.5" width="1.2" height="5.5" fill="#e8e8e8"/><rect x="300" y="75" width="9" height="1.2" fill="#555"/><rect x="304" y="76" width="1.2" height="3.8" fill="#555"/></g>
<use href="#cplus" x="27.9" y="104.1"/>
<g>
 <g transform="translate(50.3,101.3) rotate(-45)"><rect x="-5.2" y="-2.4" width="10.4" height="4.8" rx="2.2" fill="#2e363e"/><ellipse cx="-4.4" cy="0" rx="1.3" ry="2.1" fill="#6cc0f0"/><path d="M-2 -1.2 H3" stroke="#b8c2ca" stroke-width="0.7"/></g>
 <g transform="translate(55.9,104.2) rotate(-45)"><rect x="-5.2" y="-2.4" width="10.4" height="4.8" rx="2.2" fill="#2e363e"/><ellipse cx="-4.4" cy="0" rx="1.3" ry="2.1" fill="#6cc0f0"/><path d="M-2 -1.2 H3" stroke="#b8c2ca" stroke-width="0.7"/></g>
 <path d="M52 100.5 L54.5 103" stroke="#2e363e" stroke-width="2.4"/>
</g>
<g>
 <rect x="73" y="98.3" width="7" height="4" fill="#8c8c8c" stroke="#333" stroke-width="0.6"/>
 <rect x="69.4" y="102" width="13.4" height="6" rx="1" fill="#fff" stroke="#333" stroke-width="0.8"/>
 <rect x="71.5" y="102.2" width="9.5" height="6.6" fill="#555"/>
 <rect x="72" y="108" width="9" height="1.6" fill="#bff0f8" stroke="#333" stroke-width="0.5"/>
 <rect x="81" y="104" width="0.8" height="1" fill="#3050e0"/>
</g>
<g fill="none" stroke-linejoin="round">
 <path d="M153.5 99.5 H157.5 Q160 99.5 161 103 Q162 106.5 164 106.5 H165 M153.5 106.5 H157.5 Q160 106.5 161 103 Q162 99.5 164 99.5 H165" stroke="#1a8a1a" stroke-width="3.6"/>
 <path d="M153.5 99.5 H157.5 Q160 99.5 161 103 Q162 106.5 164 106.5 H165 M153.5 106.5 H157.5 Q160 106.5 161 103 Q162 99.5 164 99.5 H165" stroke="#4fd04a" stroke-width="1.8"/>
</g>
<path d="M163.2 96.8 L167.6 99.5 L163.2 102.2 Z M163.2 103.8 L167.6 106.5 L163.2 109.2 Z" fill="#3cc03a" stroke="#1a8a1a" stroke-width="0.8"/>
<g>
 <rect x="179.3" y="96.5" width="10.5" height="9" fill="#e8f2fc" stroke="#8fb0d8" stroke-width="0.8"/>
 <rect x="181" y="98" width="1.6" height="6.5" fill="#666"/>
 <rect x="183.2" y="99.5" width="1.6" height="5" fill="#888"/>
 <rect x="185.6" y="98" width="2" height="6.5" fill="#4a6cb8"/>
 <path d="M184.5 105.5 V109.5 M182.5 111 L184.5 109 L186.5 111" fill="none" stroke="#777" stroke-width="0.9"/>
</g>
<g transform="translate(208,103.5)">
 <g fill="url(#gY)" stroke="#c08a1a" stroke-width="0.5">
 <path d="M-1.6 -7.5 H1.6 L2.2 -4.5 H-2.2 Z"/>
 <path d="M-1.6 -7.5 H1.6 L2.2 -4.5 H-2.2 Z" transform="rotate(60)"/>
 <path d="M-1.6 -7.5 H1.6 L2.2 -4.5 H-2.2 Z" transform="rotate(120)"/>
 <path d="M-1.6 -7.5 H1.6 L2.2 -4.5 H-2.2 Z" transform="rotate(180)"/>
 <path d="M-1.6 -7.5 H1.6 L2.2 -4.5 H-2.2 Z" transform="rotate(240)"/>
 <path d="M-1.6 -7.5 H1.6 L2.2 -4.5 H-2.2 Z" transform="rotate(300)"/>
 </g>
 <circle r="5.6" fill="url(#gY)"/>
 <circle cx="0" cy="-1" r="1.6" fill="#222"/>
 <path d="M-0.5 0 L0.8 2.5" stroke="#fff" stroke-width="1"/>
</g>
<g>
 <rect x="224" y="96" width="6.5" height="11.5" fill="#5a8ad0" stroke="#3a62a8" stroke-width="0.5"/>
 <path d="M228.7 100 L232 97.7 H239.7 L236.5 100 Z" fill="#a8f0a0"/>
 <rect x="228.7" y="100" width="8" height="8.4" fill="#22c422" stroke="#168a16" stroke-width="0.5"/>
 <path d="M236.7 100 L239.7 97.7 V106 L236.7 108.4 Z" fill="#14a014"/>
 <rect x="226" y="106.5" width="4" height="4.5" rx="1" fill="#7c8a96"/>
</g>
<g>
 <rect x="249.7" y="98" width="10.1" height="11.5" fill="url(#gB)"/>
 <ellipse cx="254.75" cy="98" rx="5.05" ry="1.6" fill="#b8c4cc" stroke="#8a969e" stroke-width="0.5"/>
 <ellipse cx="254.75" cy="109.5" rx="5.05" ry="1.2" fill="#2a5a98"/>
 <path d="M255 107 Q257 103 260 102.5" fill="none" stroke="#2cb82c" stroke-width="2"/>
 <path d="M259 100.3 L263 102.6 L259.5 105.3 Z" fill="#2cb82c"/>
</g>
<g transform="translate(279.9,103.8)">
 <circle r="6.6" fill="#fff" stroke="#555" stroke-width="1.3"/>
 <circle r="5.2" fill="#2a9636"/>
 <path d="M-2.4 0.8 Q-2.4 -1.9 0.4 -1.9" fill="none" stroke="#fff" stroke-width="1.3"/>
 <path d="M2.4 -0.8 Q2.4 1.9 -0.4 1.9" fill="none" stroke="#fff" stroke-width="1.3"/>
 <path d="M0.2 -3.6 L2.6 -1.9 L0.2 -0.2 Z M-0.2 3.6 L-2.6 1.9 L-0.2 0.2 Z" fill="#fff"/>
</g>
<g transform="translate(303.8,103.8)">
 <circle r="6.6" fill="#fff" stroke="#d4d4d4" stroke-width="1.1"/>
 <circle r="5" fill="url(#gP)"/>
 <path d="M-3.2 0 H3.2" stroke="#fff" stroke-width="1.8"/>
</g>
<g fill="#000">
 <rect x="33.2" y="124.4" width="7.4" height="6.2" rx="0.8"/>
 <rect x="33.2" y="134" width="7.4" height="6.2" rx="0.8"/>
 <rect x="35.6" y="130" width="2.6" height="4.5"/>
 <rect x="35.6" y="140" width="2.6" height="3"/>
 <rect x="26" y="142.4" width="21.8" height="1.8"/>
 <rect x="26" y="142.4" width="1.8" height="4.5"/><rect x="36" y="142.4" width="1.8" height="4.5"/><rect x="46" y="142.4" width="1.8" height="4.5"/>
 <rect x="23.5" y="146.2" width="7.5" height="7.2" rx="0.8"/>
 <rect x="33.2" y="146.2" width="7.4" height="7.2" rx="0.8"/>
 <rect x="42.8" y="146.2" width="7.8" height="7.2" rx="0.8"/>
</g>
<g transform="translate(299,139)" fill="none" stroke="#c4c4c4" stroke-width="1.8">
 <circle r="9.2"/>
 <path d="M0 -6 V5.5 M-5 0.8 L0 5.8 L5 0.8"/>
</g>
<g>
 <path d="M36 196 L48 195.2 L52.3 199 L52.3 216.3 L39 216.3 Q36 216 36 214 Z" fill="#151515"/>
 <path d="M36 196 L38 195.5 L38 214 Q37 215.5 36 214 Z" fill="#3a3a3a"/>
 <rect x="40.8" y="195.6" width="6.6" height="5.6" fill="#8a8a8a"/>
 <rect x="44.6" y="196.4" width="1.6" height="3.8" fill="#222"/>
 <rect x="38.7" y="203.8" width="10.8" height="10.4" fill="#f2f2f2"/>
 <path d="M39.8 206.5 H48.5 M39.8 209 H48.5 M39.8 211.5 H48.5" stroke="#9a9a9a" stroke-width="0.7"/>
</g>
<g>
 <path d="M76.3 199 L89 197.7 L93.3 201.5 L93.3 217.7 L79 217.7 Q76.3 217.5 76.3 215.5 Z" fill="#1f7fd0"/>
 <rect x="81" y="198.2" width="7" height="5.4" fill="#d8e8f4"/>
 <rect x="85" y="199" width="1.6" height="3.8" fill="#1f7fd0"/>
 <rect x="78.8" y="206" width="11.8" height="10.2" fill="#eaf4fb"/>
 <path d="M80 208.5 H89.5 M80 211 H89.5 M80 213.5 H89.5" stroke="#8aa0b4" stroke-width="0.7"/>
 <path d="M69.6 201.8 Q71.5 196.8 77.5 197.4" fill="none" stroke="#2ea84a" stroke-width="2.6"/>
 <path d="M76.2 194.3 L81 197.4 L76.2 200.6 Z" fill="#2ea84a"/>
</g>
<g>
 <path d="M111 197.5 L112.6 214.6 Q118.4 217.2 124.2 214.6 L125.8 197.5 Z" fill="#2a4ab0"/>
 <path d="M112.2 199.5 L113 213 Q118.4 215 123.8 213 L124.6 199.5 Z" fill="#5a86e0" opacity="0.7"/>
 <path d="M116 211 L121 200" stroke="#dbe8ff" stroke-width="1.2"/>
 <path d="M118 211 L122.5 202" stroke="#a8c4f8" stroke-width="0.8"/>
 <ellipse cx="118.4" cy="197.2" rx="7.6" ry="2.2" fill="#c8c8c8" stroke="#888" stroke-width="0.6"/>
 <ellipse cx="118.4" cy="214.6" rx="5.6" ry="1.4" fill="#c0c4c8"/>
</g>
<g>
 <path d="M258.7 195.5 L268.5 197.5 L270.3 216 L260.5 214.5 Z" fill="#e4f0f8" stroke="#7aa6c8" stroke-width="0.6"/>
 <path d="M259 208 L270 209 L270.3 216 L260.5 214.5 Z" fill="#c4dcec"/>
 <path d="M262 210.5 L277.6 195.6" stroke="#aaa" stroke-width="2.2" stroke-linecap="round"/>
 <path d="M262.5 210 L277 196" stroke="#ddd" stroke-width="0.8"/>
</g>
<use href="#cplus" x="35" y="302"/>
<use href="#cminus" x="59" y="302"/>
<use href="#cup" x="257" y="302"/>
<use href="#cup" transform="translate(281,302) rotate(180)"/>
<use href="#chev" x="274.4" y="336"/>
<use href="#clip" x="29" y="360"/>
<use href="#clip" x="29" y="395"/>
<use href="#clip" x="29" y="430"/>
<use href="#clip" x="29" y="465"/>
<use href="#chev" x="274.4" y="521"/>
<use href="#clip" x="29" y="544"/>
<use href="#clip" x="29" y="579"/>
<use href="#clip" x="29" y="614"/>
<use href="#clip" x="29" y="649"/>
<use href="#chev" x="274.4" y="705"/>
<use href="#clip" x="29" y="729"/>
<use href="#clip" x="29" y="764"/></svg>
<svg class="a" style="left:0;top:0" width="1074" height="772" viewBox="0 0 1074 772"><defs>
<radialGradient id="gG2" cx="0.45" cy="0.3" r="0.75"><stop offset="0" stop-color="#8fe07a"/><stop offset="0.6" stop-color="#3db33a"/><stop offset="1" stop-color="#1f8f24"/></radialGradient>
<radialGradient id="gP2" cx="0.45" cy="0.3" r="0.75"><stop offset="0" stop-color="#f6c8cf"/><stop offset="1" stop-color="#f09aa8"/></radialGradient>
<linearGradient id="gDoc" x1="0" y1="0" x2="1" y2="1"><stop offset="0" stop-color="#f4f9fd"/><stop offset="0.55" stop-color="#dde9f2"/><stop offset="0.56" stop-color="#c9dce8"/><stop offset="1" stop-color="#e4eef5"/></linearGradient>
<linearGradient id="gOr" x1="0" y1="0" x2="0" y2="1"><stop offset="0" stop-color="#f8d890"/><stop offset="1" stop-color="#d89a30"/></linearGradient>
<linearGradient id="gSerB" x1="0" y1="0" x2="0" y2="1"><stop offset="0" stop-color="#3a7ac8"/><stop offset="1" stop-color="#16407a"/></linearGradient>
</defs>
<g transform="translate(343.4,106.2)">
 <circle r="14.2" fill="#f4f4f4" stroke="#6a6a6a" stroke-width="1.4"/>
 <circle r="11.4" fill="#fff" stroke="#9a9a9a" stroke-width="0.9"/>
 <circle r="10.6" fill="url(#gG2)"/>
 <path d="M-8.3 0 H8.3 M0 -8.3 V8.3" stroke="#8a8a8a" stroke-width="3.4" stroke-linecap="round"/>
 <path d="M-8.3 0 H8.3 M0 -8.3 V8.3" stroke="#fff" stroke-width="2.2" stroke-linecap="round"/>
</g>
<g transform="translate(390.4,106.2)">
 <circle r="14.2" fill="#f4f4f4" stroke="#6a6a6a" stroke-width="1.4"/>
 <circle r="11.4" fill="#fff" stroke="#9a9a9a" stroke-width="0.9"/>
 <circle r="10.6" fill="url(#gG2)"/>
 <path d="M-2.4 -7 H2.4 V1.3 H6 L0 8 L-6 1.3 H-2.4 Z" fill="#fafafa" stroke="#c8c8c8" stroke-width="0.5"/>
</g>
<g>
 <path d="M430.5 94 L444.5 96.5 L445.5 119 L431.5 117 Z" fill="#eef4fb" stroke="#9cb8d8" stroke-width="0.7"/>
 <path d="M432.5 99 L443 100.7 M432.6 102 L443.1 103.7 M432.7 105 L443.2 106.7 M432.8 108 L443.3 109.7 M432.9 111 L443.4 112.7 M433 114 L443.5 115.7" stroke="#a8c8e8" stroke-width="0.8"/>
 <path d="M449.5 102.5 Q446 104 443 107.5" fill="none" stroke="#2aa83a" stroke-width="2.6"/>
 <path d="M438.2 107.6 L444.8 103.6 L445 111 Z" fill="#2aa83a"/>
</g>
<g>
 <path d="M491 93 L505.4 95.3 L505.4 120.8 L491 117.5 Z" fill="url(#gDoc)" stroke="#6a9ac0" stroke-width="0.8"/>
 <path d="M491.5 117.8 L505.4 121 L504 122 L489 119 Z" fill="#9aa4ac" opacity="0.7"/>
 <path d="M505.4 95.3 V120.8" stroke="#404850" stroke-width="1"/>
</g>
<g>
 <path d="M560.2 93 L574.5 95.3 L574.5 120.8 L560.2 117.5 Z" fill="url(#gDoc)" stroke="#6a9ac0" stroke-width="0.8"/>
 <path d="M574.5 95.3 V120.8" stroke="#404850" stroke-width="1"/>
 <g transform="translate(571,110.5) rotate(-50)" fill="none" stroke-width="3.2">
  <rect x="-12" y="-3.6" width="12.5" height="7.2" rx="3.6" stroke="#7a8288"/>
  <rect x="-1" y="-3.6" width="12.5" height="7.2" rx="3.6" stroke="#a8b0b6"/>
 </g>
</g>
<defs><radialGradient id="gGl" cx="0.35" cy="0.3" r="0.8"><stop offset="0" stop-color="#c8ecfa"/><stop offset="0.45" stop-color="#4aa6e0"/><stop offset="1" stop-color="#1a3a8a"/></radialGradient></defs>
<g>
 <circle cx="607.6" cy="98.2" r="6.5" fill="url(#gGl)"/>
 <path d="M602 96 Q604 93.5 606.5 95 Q606 97.5 603.5 98.5 Z M604 100 Q607 99.5 608.5 102.5 Q607 104.5 604.5 103 Z M609 93 Q611.5 94 612.5 96 L610.5 96.5 Z" fill="#8ac83a"/>
 <rect x="609.5" y="96.5" width="6.3" height="9.8" fill="#e4e8ec" stroke="#a4aab0" stroke-width="0.6"/>
 <path d="M611 99 H614.5 M611 101 H614.5 M611 103 H614.5" stroke="#9aa2aa" stroke-width="0.6"/>
 <rect x="610" y="117.5" width="6.3" height="12.5" fill="#e0e4e8" stroke="#a4aab0" stroke-width="0.6"/>
 <g fill="none" stroke="#234a68">
  <circle cx="606.2" cy="123.6" r="4.2" stroke-width="1.1"/>
  <circle cx="606.2" cy="123.6" r="5.4" stroke-width="1.6" stroke-dasharray="1.5 1.3"/>
  <circle cx="606.2" cy="123.6" r="1.3" stroke-width="0.9"/>
  <circle cx="612.3" cy="118.6" r="3" stroke-width="1"/>
  <circle cx="612.3" cy="118.6" r="4" stroke-width="1.4" stroke-dasharray="1.3 1.1"/>
  <circle cx="612.3" cy="118.6" r="1" stroke-width="0.9"/>
 </g>
</g>
<g transform="translate(741.4,106.4)">
 <circle r="14.2" fill="#f8f8f8" stroke="#c8c8c8" stroke-width="1.2"/>
 <circle r="11.4" fill="#fff" stroke="#d8d8d8" stroke-width="0.8"/>
 <circle r="10.6" fill="url(#gP2)"/>
 <rect x="-7.3" y="-2.8" width="14.6" height="5.6" fill="#f4f4f4"/>
</g>
<g>
 <path d="M777 93.4 L790 95 L791.7 119.4 L778.5 118 Z" fill="#f4f8fc" stroke="#d4dde6" stroke-width="0.8"/>
 <path d="M779.5 100.5 L782.5 103.2 L787 99" fill="none" stroke="#9ee08a" stroke-width="1.8"/>
 <path d="M796.5 96.8 L788.5 114" stroke="#98e09a" stroke-width="3"/>
 <path d="M786.6 113 L788 116 L789.8 114.5 Z" fill="#d8c8a0"/>
</g>
<g>
 <path d="M372 362.5 L386 380 M395.2 362.5 L381 380" stroke="#d8dde6" stroke-width="2.6"/>
 <path d="M372 362.5 L386 380 M395.2 362.5 L381 380" stroke="#f8f9fb" stroke-width="1.2"/>
 <circle cx="375.4" cy="383.6" r="3.3" fill="#f4f8fc" stroke="#b4cce4" stroke-width="1.8"/>
 <circle cx="391.3" cy="383.6" r="3.3" fill="#f4f8fc" stroke="#b4cce4" stroke-width="1.8"/>
</g>
<g fill="#fafbfd" stroke="#ccd2de" stroke-width="0.9">
 <path d="M416.5 359.5 H429.5 L435.3 365.3 V383.5 H416.5 Z"/>
 <path d="M411.5 364.8 H424.5 L430.3 370.6 V388.5 H411.5 Z"/>
 <path d="M424.5 364.8 V370.6 H430.3"/>
</g>
<g>
 <rect x="450.3" y="361.3" width="20" height="23.2" rx="1.5" fill="url(#gOr)" stroke="#c08a3a" stroke-width="0.8"/>
 <path d="M454.5 364.5 Q455 361 460.5 361 Q466 361 466.5 364.5 Z" fill="#a8b4c8" stroke="#6a7a94" stroke-width="0.6"/>
 <circle cx="460.5" cy="359.5" r="1.5" fill="#a8b4c8" stroke="#6a7a94" stroke-width="0.5"/>
 <rect x="458.5" y="368.3" width="16.4" height="20.2" fill="#f6f8fc" stroke="#5a6ea8" stroke-width="1"/>
 <path d="M462.5 372.5 H470.5 M462.5 375 H470.5 M462.5 377.5 H470.5 M462.5 380 H470.5 M462.5 382.5 H470.5" stroke="#5a6ea8" stroke-width="1"/>
</g>
<text x="703.6" y="382.9" font-family="Liberation Serif" font-weight="bold" font-size="17" fill="url(#gSerB)" textLength="12.4" lengthAdjust="spacingAndGlyphs">A</text>
<path d="M701 374 L703 371.3 L705 374 Z" fill="#1f3a68"/>
<text x="727.6" y="382.9" font-family="Liberation Serif" font-weight="bold" font-size="14.5" fill="url(#gSerB)" textLength="10.4" lengthAdjust="spacingAndGlyphs">A</text>
<path d="M725.2 373 L729.3 373 L727.25 376 Z" fill="#1f3a68"/>
<rect x="750.3" y="369.5" width="12.4" height="9.3" fill="#fff" stroke="#7a94c8" stroke-width="0.9"/>
<text x="751.6" y="377.3" font-family="Liberation Sans" font-size="9" fill="#1a2c4a">ab</text>
<g transform="translate(760.5,379.3) rotate(-45)"><rect x="-6" y="-3" width="7.5" height="6" rx="1" fill="#5a9ae0"/><rect x="1" y="-3" width="6.5" height="6" rx="0.5" fill="#e04848"/></g>
<text x="493.6" y="413.9" font-family="Liberation Serif" font-weight="bold" fill="#1f2d50" font-size="15" textLength="8.4" lengthAdjust="spacingAndGlyphs">B</text>
<text x="517.5" y="413.9" font-family="Liberation Serif" font-weight="bold" fill="#1f2d50" font-style="italic" font-size="15" textLength="7.5" lengthAdjust="spacingAndGlyphs">I</text>
<text x="540.9" y="413.3" font-family="Liberation Serif" font-weight="bold" fill="#1f2d50" font-size="15" textLength="10" lengthAdjust="spacingAndGlyphs">U</text>
<rect x="541" y="414.2" width="10" height="1.1" fill="#1f2d50"/>
<text x="564.9" y="413.3" font-family="Liberation Serif" font-weight="bold" fill="#1f2d50" font-size="15" textLength="10" lengthAdjust="spacingAndGlyphs">U</text>
<rect x="565" y="414.2" width="10" height="1" fill="#1f2d50"/><rect x="565" y="416.2" width="10" height="1" fill="#1f2d50"/>
<text x="589" y="413.6" font-family="Liberation Serif" font-weight="bold" fill="#1f2d50" font-style="italic" font-size="15" textLength="8.5" lengthAdjust="spacingAndGlyphs">S</text>
<rect x="587.8" y="408.2" width="11" height="1.1" fill="#1f2d50"/>
<text x="613.3" y="413.6" font-family="Liberation Serif" font-weight="bold" fill="#1f2d50" font-style="italic" font-size="15" textLength="8.5" lengthAdjust="spacingAndGlyphs">S</text>
<rect x="612" y="407.2" width="11.2" height="1" fill="#1f2d50"/><rect x="612" y="409.6" width="11.2" height="1" fill="#1f2d50"/>
<text x="635.8" y="413.1" font-family="Liberation Serif" font-weight="bold" fill="#1f2d50" font-size="12" textLength="10.3" lengthAdjust="spacingAndGlyphs">X</text>
<text x="646.4" y="407.2" font-family="Liberation Sans" font-weight="bold" font-size="6" fill="#c02020">2</text>
<text x="660" y="413.1" font-family="Liberation Serif" font-weight="bold" fill="#1f2d50" font-size="12" textLength="9.2" lengthAdjust="spacingAndGlyphs">X</text>
<text x="669.6" y="415.4" font-family="Liberation Sans" font-weight="bold" font-size="6" fill="#c02020">2</text>
<text x="682.2" y="413.7" font-family="Liberation Serif" font-weight="bold" font-size="14" fill="#2a66b8" textLength="15.4" lengthAdjust="spacingAndGlyphs">Aa</text>
<path d="M706.3 407.5 H711 L708.65 410.2 Z M746 407.5 H750.6 L748.3 410.2 Z M782.8 407.5 H788 L785.4 410.2 Z" fill="#333"/>
<rect x="723.3" y="401.3" width="12.5" height="9.2" fill="#fff" stroke="#7a94c8" stroke-width="0.9"/>
<text x="724.5" y="409" font-family="Liberation Sans" font-size="8.5" fill="#1a2c4a">ab</text>
<path d="M730.5 412 L737.5 404.5" stroke="#e05050" stroke-width="3.2" stroke-linecap="round"/>
<rect x="723" y="414.2" width="16.3" height="2.6" fill="#000"/>
<text x="762.7" y="413" font-family="Liberation Serif" font-weight="bold" font-size="14" fill="#1f4f98" textLength="10.2" lengthAdjust="spacingAndGlyphs">A</text>
<rect x="759.8" y="414.2" width="16.2" height="2.6" fill="#000"/>
<g fill="none" stroke="#3a78c8" stroke-width="0.9">
 <circle cx="805" cy="371.4" r="1.6"/><circle cx="805" cy="376.6" r="1.6"/><circle cx="805" cy="381.8" r="1.6"/>
</g>
<path d="M809.2 371.4 H816.9 M809.2 376.6 H816.9 M809.2 381.8 H816.9" stroke="#1f2d50" stroke-width="1.3"/>
<g font-family="Liberation Sans" font-weight="bold" font-size="5.5" fill="#a81a1a">
 <text x="828" y="373.4">1</text><text x="828" y="378.6">2</text><text x="828" y="383.8">3</text>
 <text x="851" y="373.4">1</text><text x="851.5" y="378.6">a</text><text x="856.8" y="383.8">i</text>
</g>
<path d="M832.2 371.4 H839.9 M832.2 376.6 H839.9 M832.2 381.8 H839.9" stroke="#1f2d50" stroke-width="1.3"/>
<path d="M855.5 371.4 H861.4 M857 376.6 H863 M860 381.8 H865" stroke="#1f2d50" stroke-width="1.3"/>
<path d="M877 370.5 H891 M882 373.5 H891 M884 376.5 H891 M882 379.5 H891 M877 382.5 H891" stroke="#1f2d50" stroke-width="1"/>
<path d="M876.8 376.5 L880 373.8 V375.6 H884 V377.4 H880 V379.2 Z" fill="#3a78c8"/>
<path d="M901 370.5 H915 M906 373.5 H915 M909.5 376.5 H915 M906 379.5 H915 M901 382.5 H915" stroke="#1f2d50" stroke-width="1"/>
<path d="M909.5 376.5 L906.3 373.8 V375.6 H901.5 V377.4 H906.3 V379.2 Z" fill="#3a78c8"/>
<path d="M932 372.3 H939.2 V373.8 H938.6 V383 H936.8 V373.8 H935.4 V383 H933.6 V378.6 Q928 378.6 928 375.4 Q928 372.3 932 372.3 Z" fill="#1f2d50"/>
<rect x="802.5" y="402.5" width="15" height="11" rx="1.5" fill="#e8f2fa" opacity="0.55"/>
<path d="M804 404.5 H816 M804 406.5 H812.8 M804 408.5 H816 M804 410.5 H812.8 M804 412.5 H816" stroke="#1f2d50" stroke-width="1.05"/>
<path d="M828 404.5 H840 M831.2 406.5 H836.9 M828 408.5 H840 M831.2 410.5 H836.9 M828 412.5 H840" stroke="#1f2d50" stroke-width="1.05"/>
<path d="M852 404.5 H864 M855.2 406.5 H864 M852 408.5 H864 M855.2 410.5 H864 M852 412.5 H864" stroke="#1f2d50" stroke-width="1.05"/>
<path d="M876 404.5 H888 M876 406.5 H888 M876 408.5 H888 M876 410.5 H888 M876 412.5 H888" stroke="#1f2d50" stroke-width="1.05"/>
<path d="M902.6 403.5 V414.5" stroke="#3a78c8" stroke-width="1"/>
<path d="M900.3 404.3 L902.6 401 L904.9 404.3 Z M900.3 413.3 L902.6 416.6 L904.9 413.3 Z" fill="#3a78c8"/>
<path d="M907.4 404.5 H914.7 M907.4 408.5 H912.7 M907.4 412.5 H914.7" stroke="#1f2d50" stroke-width="1.05"/>
<path d="M924 407.4 H929.3 L926.65 410.2 Z" fill="#333"/>
<path d="M941 402.5 H957 M941 404.5 H957 M941 406.5 H957 M941 408.5 H949 M941 410.5 H949 M941 412.5 H949" stroke="#1f2d50" stroke-width="1.05"/>
<path d="M951.5 409.6 H957 M953.3 409.6 V416.6 M956 409.6 V416.6" stroke="#1f2d50" stroke-width="1.6"/>
<circle cx="951.2" cy="411.6" r="2" fill="#1f2d50"/>
<g>
 <path d="M971.5 377 L973.5 366 Q975 362.8 978 363 Q981 363.2 981.2 366.5 L982 377 Z" fill="#4a5668"/>
 <path d="M987.5 377 L988.3 366.5 Q988.5 363.2 991.5 363 Q994.5 362.8 996 366 L998 377 Z" fill="#4a5668"/>
 <path d="M974.5 366.5 Q976 364.5 978 365" stroke="#c8d0dc" stroke-width="1"/>
 <path d="M990 366.5 Q991.5 364.5 993.5 365" stroke="#c8d0dc" stroke-width="1"/>
 <rect x="980" y="369" width="9" height="5" fill="#2a3444"/>
 <circle cx="977" cy="378.6" r="6.8" fill="#3a4a68"/>
 <circle cx="992.6" cy="378.6" r="6.8" fill="#3a4a68"/>
 <circle cx="977" cy="378.6" r="5" fill="#6aa0e8"/>
 <circle cx="992.6" cy="378.6" r="5" fill="#6aa0e8"/>
 <circle cx="975.6" cy="377.2" r="2" fill="#d8ecff"/>
 <circle cx="991.2" cy="377.2" r="2" fill="#d8ecff"/>
</g>
<g>
 <defs><linearGradient id="gArc" x1="0" y1="0" x2="0" y2="1"><stop offset="0" stop-color="#d4ecfa"/><stop offset="1" stop-color="#7cb8ea"/></linearGradient></defs>
 <path d="M1015 372.3 Q1015.6 361 1028 361 Q1034.6 361 1038.6 364 L1040.7 362 V372.3 H1030.4 L1033.6 369.4 Q1031.4 366 1028 366 Q1021 366 1020.9 372.3 Z" fill="url(#gArc)" stroke="#5a8ed0" stroke-width="0.8" stroke-linejoin="round"/>
 <text x="1012.9" y="388.6" font-family="Liberation Sans" font-weight="bold" font-size="19" fill="#cc2b2b" textLength="12.1" lengthAdjust="spacingAndGlyphs">A</text>
 <text x="1034.2" y="388.6" font-family="Liberation Sans" font-weight="bold" font-size="19" fill="#2e8614" textLength="9" lengthAdjust="spacingAndGlyphs">B</text>
</g>
<g fill="#777"><rect x="317.5" y="533.8" width="1.5" height="1.2"/><rect x="317.5" y="536" width="1.5" height="1.2"/><rect x="317.5" y="538.2" width="1.5" height="1.2"/><rect x="317.5" y="540.4" width="1.5" height="1.2"/><rect x="317.5" y="542.6" width="1.5" height="1.2"/><rect x="317.5" y="544.8" width="1.5" height="1.2"/><rect x="317.5" y="547" width="1.5" height="1.2"/></g>
</svg>
<div class="a" style="left:15px;top:771px;width:1059px;height:1px;background:#000"></div>
</body></html>
